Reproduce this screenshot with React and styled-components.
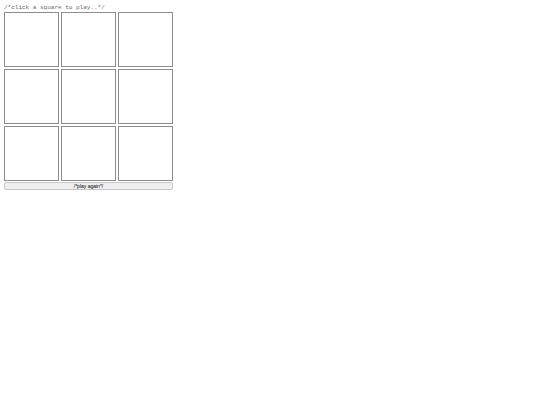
import { useState } from "react";
import styled, { createGlobalStyle } from "styled-components";

const GlobalStyle = createGlobalStyle`
  body {
    margin: 4px;
    background: #ffffff;
  }
`;

const Game = styled.main`
  display: flex;
  flex-direction: column;
  align-items: flex-start;
`;

const Status = styled.p`
  margin: 0;
  color: #6a6a6a;
  font-family: "Liberation Mono", monospace;
  font-size: 6px;
  line-height: 8px;
  white-space: nowrap;
`;

const Board = styled.div`
  display: grid;
  grid-template-columns: repeat(3, 55px);
  grid-auto-rows: 55px;
  gap: 2px;
`;

const Square = styled.button`
  box-sizing: border-box;
  padding: 0;
  border: 1px solid #8c8c8c;
  border-radius: 0;
  background: #ffffff;
  color: #333333;
  font-family: "Liberation Mono", monospace;
  font-size: 32px;
  cursor: pointer;
`;

const Controls = styled.div`
  display: grid;
  gap: 1px;
`;

const ResetButton = styled.button`
  box-sizing: border-box;
  height: 8px;
  padding: 0;
  border: 1px solid #c8c8c8;
  border-radius: 2px;
  background: #efefef;
  color: #000000;
  font-family: "Liberation Sans", sans-serif;
  font-size: 5px;
  line-height: 6px;
  cursor: pointer;
`;

const LINES = [
  [0, 1, 2],
  [3, 4, 5],
  [6, 7, 8],
  [0, 3, 6],
  [1, 4, 7],
  [2, 5, 8],
  [0, 4, 8],
  [2, 4, 6],
];

const EMPTY_BOARD = Array(9).fill("");

const getWinner = (squares) => {
  const line = LINES.find(
    ([a, b, c]) =>
      squares[a] && squares[a] === squares[b] && squares[a] === squares[c]
  );
  return line ? squares[line[0]] : null;
};

const getStatus = (squares, player) => {
  const winner = getWinner(squares);
  if (winner) return `/*${winner} wins*/`;
  if (squares.every((square) => square)) return "/*draw*/";
  if (squares.every((square) => !square)) return "/*click a square to play..*/";
  return `/*${player} to play..*/`;
};

const App = () => {
  const [squares, setSquares] = useState(EMPTY_BOARD);
  const player = squares.filter(Boolean).length % 2 === 0 ? "x" : "o";

  const squareClickHandler = (index) => {
    if (squares[index] || getWinner(squares)) return;
    setSquares(squares.map((square, i) => (i === index ? player : square)));
  };

  return (
    <Game>
      <GlobalStyle />
      <Status>{getStatus(squares, player)}</Status>
      <Controls>
        <Board>
          {squares.map((square, index) => (
            <Square
              key={index}
              aria-label={`square ${index + 1}`}
              onClick={() => squareClickHandler(index)}
            >
              {square}
            </Square>
          ))}
        </Board>
        <ResetButton onClick={() => setSquares(EMPTY_BOARD)}>
          /*play again*/
        </ResetButton>
      </Controls>
    </Game>
  );
};

export default App;
